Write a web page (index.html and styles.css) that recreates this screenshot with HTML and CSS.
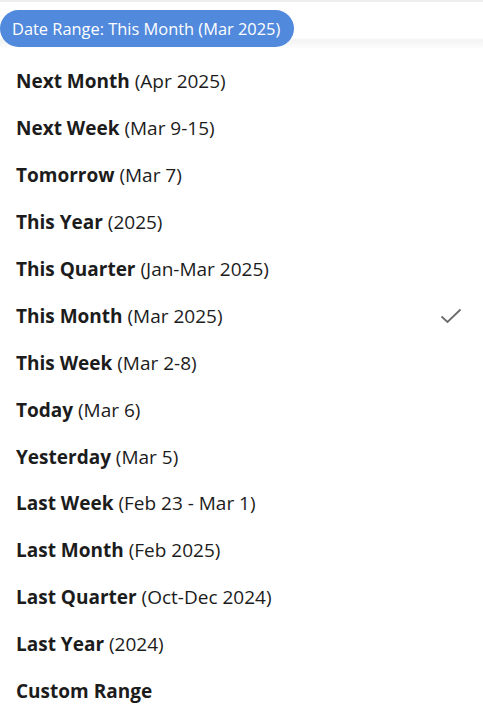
FILE: index.html
```html
<!DOCTYPE html>
<html>
<head>
  <meta charset="utf-8">
  <title>Date Range</title>
  <link rel="stylesheet" href="styles.css">
</head>
<body>
  <div class="filter-bar">
    <span class="range-pill">Date Range: This Month (Mar 2025)</span>
  </div>

  <!-- Menu de rangos -->
  <ul class="range-menu">
    <li class="range-item"><span><b>Next Month</b> (Apr 2025)</span></li>
    <li class="range-item"><span><b>Next Week</b> (Mar 9-15)</span></li>
    <li class="range-item"><span><b>Tomorrow</b> (Mar 7)</span></li>
    <li class="range-item"><span><b>This Year</b> (2025)</span></li>
    <li class="range-item"><span><b>This Quarter</b> (Jan-Mar 2025)</span></li>
    <li class="range-item selected">
      <span><b>This Month</b> (Mar 2025)</span>
      <svg class="check" width="22" height="16" viewBox="0 0 22 16">
        <path d="M1.5 8.5 L7.5 14 L20.5 1.5" fill="none" stroke="#6b6b6b" stroke-width="1.8"/>
      </svg>
    </li>
    <li class="range-item"><span><b>This Week</b> (Mar 2-8)</span></li>
    <li class="range-item"><span><b>Today</b> (Mar 6)</span></li>
    <li class="range-item"><span><b>Yesterday</b> (Mar 5)</span></li>
    <li class="range-item"><span><b>Last Week</b> (Feb 23 - Mar 1)</span></li>
    <li class="range-item"><span><b>Last Month</b> (Feb 2025)</span></li>
    <li class="range-item"><span><b>Last Quarter</b> (Oct-Dec 2024)</span></li>
    <li class="range-item"><span><b>Last Year</b> (2024)</span></li>
    <li class="range-item"><span><b>Custom Range</b></span></li>
  </ul>
</body>
</html>
```

FILE: styles.css
```css
* {
  box-sizing: border-box;
  margin: 0;
  padding: 0;
}

html, body {
  width: 100%;
  height: 100%;
  overflow: hidden;
  background: #fff;
  font-family: 'Open Sans', 'Noto Sans', sans-serif;
  color: #1c1c1c;
}

/* Barra superior */
.filter-bar {
  border-top: 2px solid #eeeeee;
  padding-top: 8px;
  background: linear-gradient(to bottom, #fff 0, #fff 36px, #f3f3f3 38px, #fff 48px);
  height: 48px;
}

.range-pill {
  display: inline-block;
  background: #5189dc;
  color: #fff;
  font-size: 16.4px;
  line-height: 37px;
  height: 37px;
  padding: 0 14px 0 12px;
  border-radius: 19px;
}

/* Lista */
.range-menu {
  list-style: none;
  padding-top: 10px;
}

.range-item {
  display: flex;
  align-items: center;
  justify-content: space-between;
  height: 46.9px;
  padding: 0 21px 0 16px;
  font-size: 19px;
  color: #1c1c1c;
}

.range-item b {
  font-weight: 700;
}

.check {
  display: block;
}
```
